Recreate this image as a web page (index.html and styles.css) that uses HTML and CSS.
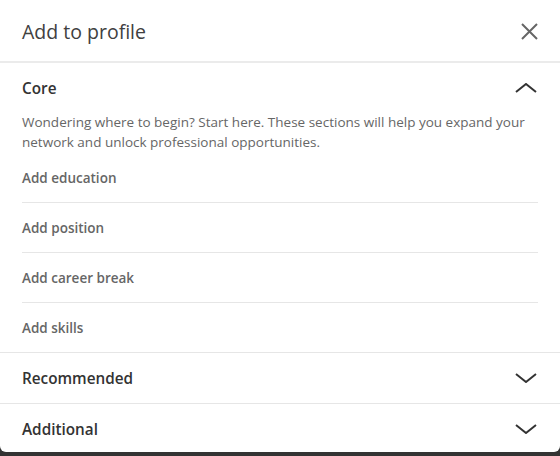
FILE: index.html
```html
<!DOCTYPE html>
<html>
<head>
<meta charset="utf-8">
<link rel="stylesheet" href="styles.css">
</head>
<body>
<div class="page">
  <div class="modal">
    <header class="modal-header">
      <h2 class="modal-title">Add to profile</h2>
      <button class="close-btn" aria-label="Dismiss">
        <svg width="17" height="17" viewBox="0 0 17 17"><path d="M1 1L16 16M16 1L1 16" stroke="#666" stroke-width="2" fill="none"/></svg>
      </button>
    </header>
    <section class="section open">
      <div class="section-head">
        <span class="section-title">Core</span>
        <svg class="chev" width="22" height="10" viewBox="0 0 22 10"><path d="M1 9L11 1L21 9" stroke="#333" stroke-width="2" fill="none"/></svg>
      </div>
      <p class="section-desc">Wondering where to begin? Start here. These sections will help you expand your network and unlock professional opportunities.</p>
      <ul class="items">
        <li class="item">Add education</li>
        <li class="item">Add position</li>
        <li class="item">Add career break</li>
        <li class="item">Add skills</li>
      </ul>
    </section>
    <section class="section">
      <div class="section-head">
        <span class="section-title">Recommended</span>
        <svg class="chev" width="22" height="10" viewBox="0 0 22 10"><path d="M1 1L11 9L21 1" stroke="#333" stroke-width="2" fill="none"/></svg>
      </div>
    </section>
    <section class="section last">
      <div class="section-head">
        <span class="section-title">Additional</span>
        <svg class="chev" width="22" height="10" viewBox="0 0 22 10"><path d="M1 1L11 9L21 1" stroke="#333" stroke-width="2" fill="none"/></svg>
      </div>
    </section>
  </div>
</div>
</body>
</html>
```
FILE: styles.css
```css
* { box-sizing: border-box; }
html, body { margin: 0; padding: 0; }
body {
  background: #333;
  font-family: "Open Sans", Lato, sans-serif;
  width: 560px;
  height: 456px;
  overflow: hidden;
}
.page { width: 560px; height: 456px; background: #333; }
.modal {
  background: #fff;
  height: 452px;
  border-radius: 0 0 6px 6px;
  overflow: hidden;
}
.modal-header {
  height: 63px;
  border-bottom: 2px solid #ebebeb;
  display: flex;
  align-items: center;
  justify-content: space-between;
  padding: 0 22px 0 22px;
}
.modal-title {
  margin: 0;
  font-size: 19.5px;
  font-weight: 400;
  color: #404040;
  position: relative;
  top: 1px;
}
.close-btn {
  border: 0;
  background: none;
  padding: 0;
  width: 17px;
  height: 17px;
  display: flex;
  position: relative;
  top: 1px;
}
.section { border-bottom: 1px solid #e6e6e6; }
.section.last { border-bottom: 0; }
.section-head {
  height: 50px;
  display: flex;
  align-items: center;
  justify-content: space-between;
  padding: 0 23px 0 22px;
}
.open .section-head { height: 49px; }
.section-title {
  font-size: 15.3px;
  font-weight: 600;
  color: #333;
}
.section-desc {
  margin: 0;
  padding: 0 22px 1px;
  font-size: 13.5px;
  line-height: 20px;
  color: #666;
}
.items { list-style: none; margin: 0; padding: 0 22px; }
.item {
  height: 50px;
  display: flex;
  align-items: center;
  font-size: 13.5px;
  font-weight: 600;
  color: #666;
  border-bottom: 1px solid #e6e6e6;
}
.item:last-child { border-bottom: 0; height: 49px; }
```
